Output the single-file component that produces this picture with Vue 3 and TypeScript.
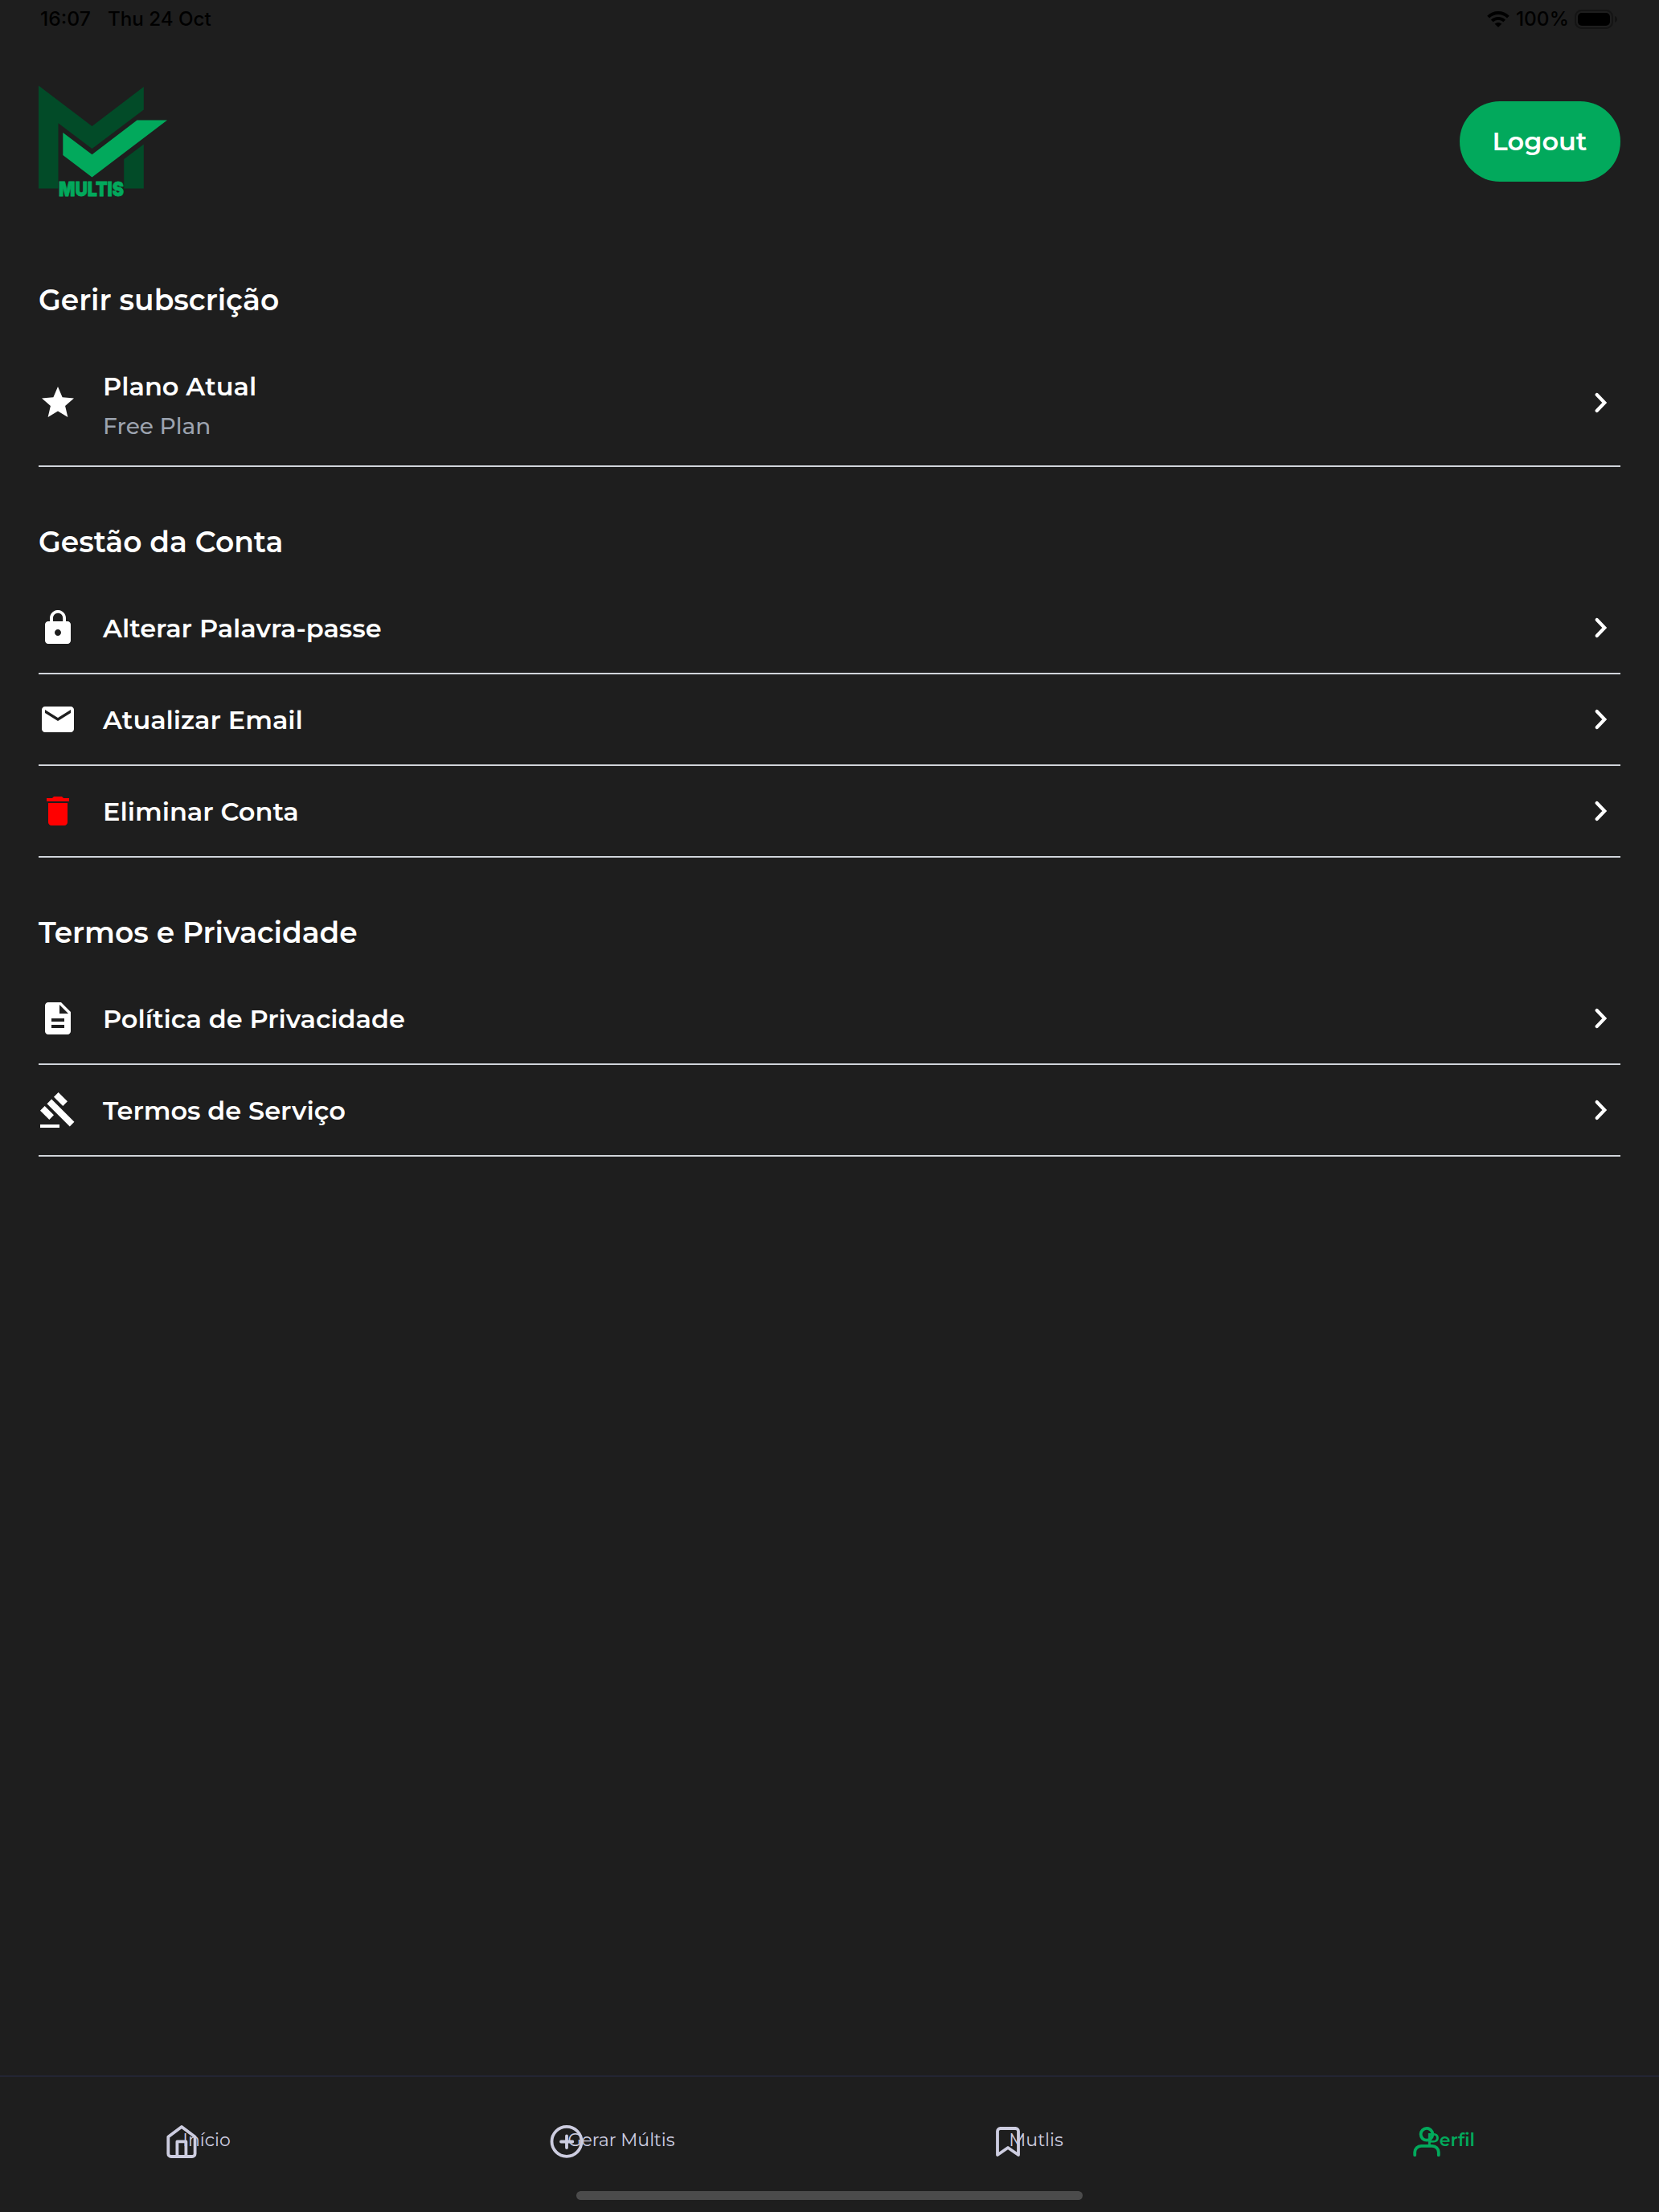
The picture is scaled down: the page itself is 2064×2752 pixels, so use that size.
<script setup lang="ts">
import { defineComponent, h } from 'vue'

const pen = document.createElement('canvas').getContext('2d')!

/* A status bar text whose visible ink fills `width`. */
const StatusText = defineComponent({
  props: {
    text: { type: String, required: true },
    width: { type: Number, required: true },
  },
  setup(props) {
    return () => {
      pen.font = '500 24px Inter, sans-serif'
      const m = pen.measureText(props.text)
      const scale = props.width / (m.actualBoundingBoxLeft + m.actualBoundingBoxRight)
      return h('svg', { width: props.width, height: 17, overflow: 'visible' }, [
        h(
          'text',
          {
            x: m.actualBoundingBoxLeft * scale,
            y: 17,
            textLength: m.width * scale,
            lengthAdjust: 'spacingAndGlyphs',
            'font-family': 'Inter, sans-serif',
            'font-size': 24,
            'font-weight': 500,
            fill: 'currentColor',
          },
          props.text,
        ),
      ])
    }
  },
})

interface Row {
  label: string
  icon: string
  sub?: string
  danger?: boolean
}
interface Section {
  title: string
  rows: Row[]
}

const icons: Record<string, string> = {
  star: 'M12 17.27 18.18 21l-1.64-7.03L22 9.24l-7.19-.61L12 2 9.19 8.63 2 9.24l5.46 4.73L5.82 21z',
  lock: 'M18 8h-1V6c0-2.76-2.24-5-5-5S7 3.24 7 6v2H6c-1.1 0-2 .9-2 2v10c0 1.1.9 2 2 2h12c1.1 0 2-.9 2-2V10c0-1.1-.9-2-2-2zm-6 9c-1.1 0-2-.9-2-2s.9-2 2-2 2 .9 2 2-.9 2-2 2zM9 8V6c0-1.71 1.39-3.1 3.1-3.1S15.1 4.29 15.1 6v2H9z',
  mail: 'M20 4H4c-1.1 0-1.99.9-1.99 2L2 18c0 1.1.9 2 2 2h16c1.1 0 2-.9 2-2V6c0-1.1-.9-2-2-2zm0 4-8 5-8-5V6l8 5 8-5v2z',
  trash: 'M6 19c0 1.1.9 2 2 2h8c1.1 0 2-.9 2-2V7H6v12zM19 4h-3.5l-1-1h-5l-1 1H5v2h14V4z',
  doc: 'M14 2H6c-1.1 0-1.99.9-1.99 2L4 20c0 1.1.89 2 1.99 2H18c1.1 0 2-.9 2-2V8l-6-6zm2 16H8v-2h8v2zm0-4H8v-2h8v2zm-3-5V3.5L18.5 9H13z',
  gavel:
    'M1 21h12v2H1zM5.245 8.07l2.83-2.827 14.14 14.142-2.828 2.828zM12.317 1l5.657 5.656-2.83 2.83-5.654-5.66zM3.825 9.485l5.657 5.657-2.828 2.828-5.657-5.657z',
}

const sections: Section[] = [
  {
    title: 'Gerir subscrição',
    rows: [{ label: 'Plano Atual', icon: 'star', sub: 'Free Plan' }],
  },
  {
    title: 'Gestão da Conta',
    rows: [
      { label: 'Alterar Palavra-passe', icon: 'lock' },
      { label: 'Atualizar Email', icon: 'mail' },
      { label: 'Eliminar Conta', icon: 'trash', danger: true },
    ],
  },
  {
    title: 'Termos e Privacidade',
    rows: [
      { label: 'Política de Privacidade', icon: 'doc' },
      { label: 'Termos de Serviço', icon: 'gavel' },
    ],
  },
]

const tabs = [
  { id: 'home', label: 'Início' },
  { id: 'create', label: 'Gerar Múltis' },
  { id: 'saved', label: 'Mutlis' },
  { id: 'profile', label: 'Perfil' },
]
</script>

<template>
  <div class="screen">
    <div class="status">
      <div class="status-left">
        <StatusText text="16:07" :width="61" />
        <StatusText text="Thu 24 Oct" :width="127.5" />
      </div>
      <div class="status-right">
        <svg class="wifi" width="28" height="20" viewBox="0 0 28 20">
          <path d="M1.6 7.2a17.6 17.6 0 0 1 24.8 0" fill="none" stroke="#000" stroke-width="4" />
          <path d="M6.3 12a11 11 0 0 1 15.4 0" fill="none" stroke="#000" stroke-width="3.8" />
          <path d="M14 20l-4.3-4.3a6.2 6.2 0 0 1 8.6 0z" fill="#000" />
        </svg>
        <StatusText text="100%" :width="63" />
        <svg class="battery" width="54" height="24" viewBox="0 0 54 24">
          <rect x="1" y="1" width="46" height="22" rx="7.5" fill="none" stroke="#141414" stroke-width="2" />
          <rect x="4" y="4" width="40" height="16" rx="5" fill="#000" />
          <path d="M50 8c4 1.2 4 6.800 0 8z" fill="#131313" />
        </svg>
      </div>
    </div>

    <header class="header">
      <svg class="logo" width="160" height="140" viewBox="48 106 160 140">
        <path
          fill="#024b28"
          d="M48 106.500 114.500 157 178.800 108V136.500L114.500 185 72.500 153.200V234.500H48zM154.200 198 178.800 179.500V234.500H154.200z"
        />
        <path fill="#02a95c" d="M78.300 165 114.500 192.300 170.500 149.600H208L114.500 220.500 78.300 193z" />
        <text
          x="73"
          y="244.400"
          textLength="81"
          lengthAdjust="spacingAndGlyphs"
          class="logo-word"
        >MULTIS</text>
      </svg>
      <button class="logout">Logout</button>
    </header>

    <main class="content">
      <section v-for="s in sections" :key="s.title">
        <h2 class="title">{{ s.title }}</h2>
        <div v-for="r in s.rows" :key="r.label" class="row" :class="{ tall: r.sub }">
          <svg class="icon" :class="{ danger: r.danger }" width="48" height="48" viewBox="0 0 24 24">
            <path :d="icons[r.icon]" fill="currentColor" />
          </svg>
          <div class="labels">
            <span class="label">{{ r.label }}</span>
            <span v-if="r.sub" class="sub">{{ r.sub }}</span>
          </div>
          <svg class="chevron" width="48" height="48" viewBox="0 0 48 48">
            <path
              d="M18.700 14 28.300 24 18.700 34"
              fill="none"
              stroke="#fff"
              stroke-width="4.200"
              stroke-linecap="round"
            />
          </svg>
        </div>
      </section>
    </main>

    <nav class="tabs">
      <div v-for="t in tabs" :key="t.id" class="tab" :class="t.id">
        <span>{{ t.label }}</span>
        <svg class="tab-icon" width="44" height="44" viewBox="0 0 44 44">
          <template v-if="t.id === 'home'">
            <path d="M5.300 16.500 22 4l16.600 12.500V37.500a3.500 3.500 0 0 1-3.500 3.500H8.800a3.500 3.500 0 0 1-3.500-3.500z" />
            <path d="M16.400 41V22.400H27.400V41" />
          </template>
          <template v-else-if="t.id === 'create'">
            <circle cx="22" cy="22.300" r="18.500" />
            <path d="M22 15.300V30M15 22.500H29.300" />
          </template>
          <path v-else-if="t.id === 'saved'" d="M9 39V9.500A3.500 3.500 0 0 1 12.500 6H31.500A3.500 3.500 0 0 1 35 9.500V39L22 30z" />
          <template v-else>
            <circle cx="22" cy="13.300" r="7.400" />
            <path d="M7.200 39.200V35.800a8 8 0 0 1 8-8H28.800a8 8 0 0 1 8 8V39.200" />
          </template>
        </svg>
      </div>
      <div class="home-indicator"></div>
    </nav>
  </div>
</template>

<style>
body {
  margin: 0;
  background: #1e1e1e;
}
</style>

<style scoped>
.screen {
  display: flex;
  flex-direction: column;
  width: 2064px;
  height: 2752px;
  background: #1e1e1e;
  color: #fff;
  font-family: Montserrat, Inter, sans-serif;
}
svg {
  display: block;
  flex: none;
}
.status {
  display: flex;
  justify-content: space-between;
  box-sizing: border-box;
  height: 48px;
  padding: 15px 51px 0;
  color: #000;
}
.status-left {
  display: flex;
  gap: 23px;
}
.status-right {
  display: flex;
  gap: 9px;
}
.wifi {
  margin: -1px 0 0 -1px;
}
.battery {
  margin-top: -3px;
}
.header {
  display: flex;
  align-items: center;
  justify-content: space-between;
  height: 256px;
  padding: 0 48px;
}
.logo {
  overflow: visible;
}
.logo-word {
  font-family: Inter, sans-serif;
  font-size: 24.5px;
  font-weight: 900;
  fill: #02a95c;
  stroke: #02a95c;
  stroke-width: 0.8px;
}
.logout {
  box-sizing: border-box;
  width: 200px;
  height: 100px;
  padding: 0 1px 1px 0;
  border: 0;
  border-radius: 50px;
  background: #02a95c;
  color: #fff;
  font: 600 32px/39px Montserrat, Inter, sans-serif;
}
.content {
  display: flex;
  flex: 1;
  flex-direction: column;
  gap: 70px;
  padding: 46px 48px 0;
}
.title {
  margin: 0 0 28px;
  font-size: 36px;
  font-weight: 600;
  line-height: 46px;
}
.row {
  display: flex;
  align-items: center;
  height: 112px;
  border-bottom: 2px solid #d1d5db;
}
.row.tall {
  height: 155px;
}
.icon {
  margin-right: 32px;
}
.icon.danger {
  color: #f00;
}
.tall .icon,
.tall .chevron {
  margin-top: -1px;
}
.labels {
  display: flex;
  flex: 1;
  flex-direction: column;
  gap: 13px;
  margin-top: 1px;
}
.tall .labels {
  margin-top: 5px;
}
.label {
  font-size: 32px;
  font-weight: 600;
  line-height: 39px;
}
.sub {
  color: #9ca3af;
  font-size: 28px;
  font-weight: 500;
  line-height: 34px;
}
.tabs {
  position: relative;
  display: flex;
  height: 168px;
  border-top: 2px solid #232533;
}
.tab {
  position: relative;
  display: flex;
  flex: 1;
  justify-content: center;
  padding: 65px 2px 0 0;
  color: #cdcde0;
  font-size: 22px;
  font-weight: 400;
  line-height: 27px;
}
.tab.profile {
  color: #02a95c;
  font-weight: 600;
}
.tab-icon {
  position: absolute;
  top: 58px;
  left: 204px;
  fill: none;
  stroke: currentColor;
  stroke-width: 3.800px;
  stroke-linecap: round;
  stroke-linejoin: round;
}
.create .tab-icon {
  left: 167px;
}
.saved .tab-icon {
  left: 200px;
}
.profile .tab-icon {
  left: 205px;
}
.home-indicator {
  position: absolute;
  top: 142px;
  left: 717px;
  width: 630px;
  height: 11px;
  border-radius: 6px;
  background: #4b4b4b;
}
</style>
